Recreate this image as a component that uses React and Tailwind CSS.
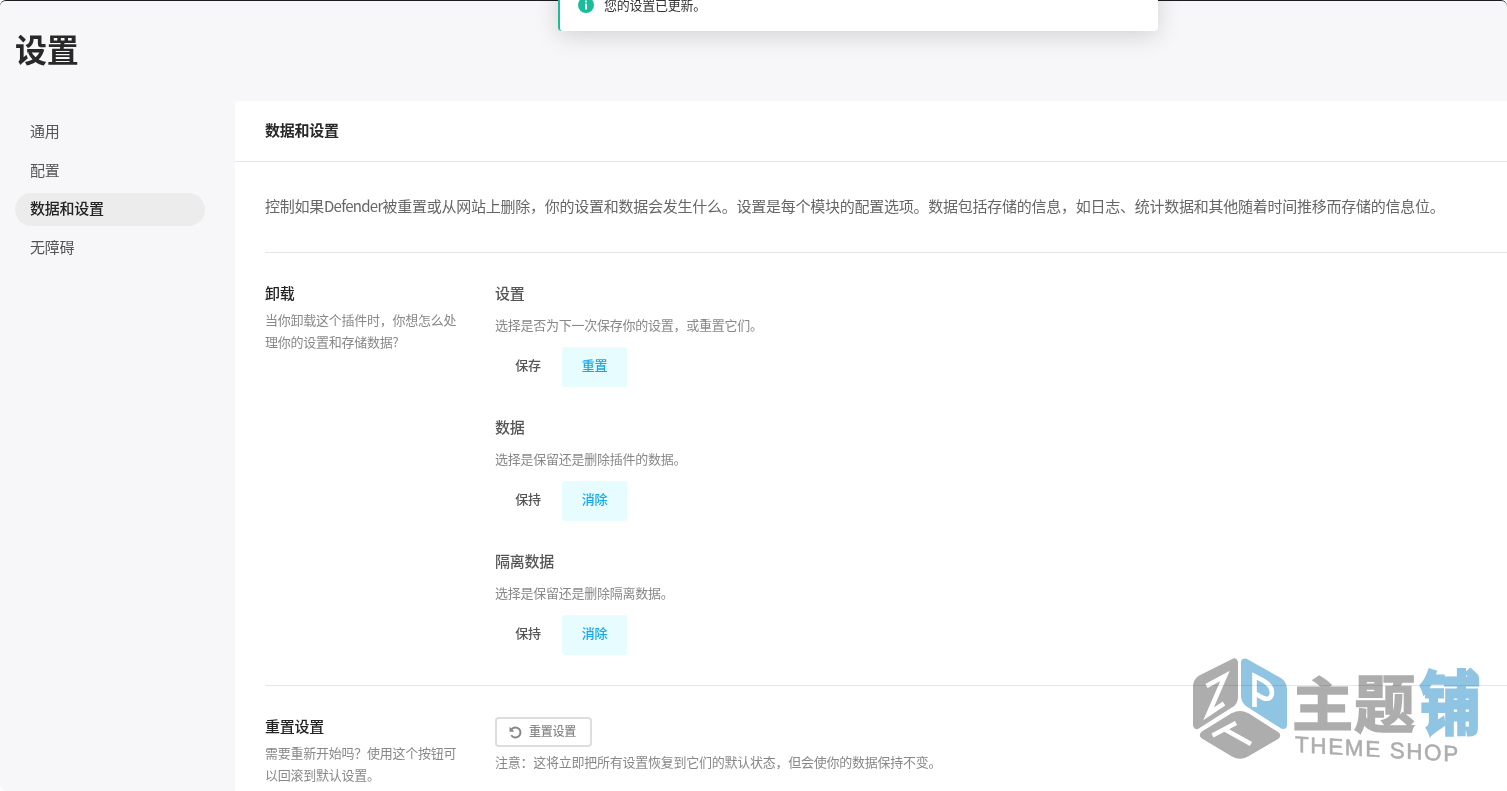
import React, { useState } from "react";

const menu = ["通用", "配置", "数据和设置", "无障碍"];

const uninstallOptions = [
  {
    title: "设置",
    description: "选择是否为下一次保存你的设置，或重置它们。",
    keep: "保存",
    remove: "重置",
  },
  {
    title: "数据",
    description: "选择是保留还是删除插件的数据。",
    keep: "保持",
    remove: "消除",
  },
  {
    title: "隔离数据",
    description: "选择是保留还是删除隔离数据。",
    keep: "保持",
    remove: "消除",
  },
];

function Notice() {
  return (
    <div className="absolute left-[558px] top-[-29px] flex h-[60px] w-[600px] items-center rounded border-l-2 border-[#1abc9c] bg-white pl-[18px] shadow-[0_5px_25px_0_rgba(0,0,0,0.15)]">
      <svg width="16" height="16" viewBox="0 0 16 16" className="mt-[8px]">
        <circle cx="8" cy="8" r="8" fill="#1abc9c" />
        <rect x="7" y="3.4" width="2" height="2" rx="0.6" fill="#fff" />
        <rect x="7" y="6.6" width="2" height="6" rx="0.6" fill="#fff" />
      </svg>
      <p className="ml-[10px] mt-[7px] text-[13px] leading-[22px] text-[#333]">
        您的设置已更新。
      </p>
    </div>
  );
}

function OptionTabs({ keep, remove }) {
  const [active, setActive] = useState("remove");
  const on = "bg-[#e6fcff] text-[#17a8e3]";
  const off = "text-[#555]";

  return (
    <div className="mt-[11px] flex h-10 text-[13px] font-medium leading-[36px]">
      <button
        onClick={() => setActive("keep")}
        className={`w-[66px] rounded-[3px] pb-[4px] ${active === "keep" ? on : off}`}
      >
        {keep}
      </button>
      <button
        onClick={() => setActive("remove")}
        className={`ml-px w-[65px] rounded-[3px] pb-[4px] ${active === "remove" ? on : off}`}
      >
        {remove}
      </button>
    </div>
  );
}

function ShopLogo() {
  return (
    <svg
      width="300"
      height="120"
      viewBox="1185 650 300 120"
      className="pointer-events-none absolute left-[1185px] top-[650px] mix-blend-multiply"
    >
      <g strokeLinejoin="round" strokeWidth="8">
        <path d="M1234 662.5V697Q1234 702 1230 704L1197 725V687Q1197 682 1201 679Z" fill="#adadad" stroke="#adadad" />
        <path d="M1245 662.5L1278 681Q1283 684 1283 689V725L1250 704Q1245 701 1245 696Z" fill="#8fc4e2" stroke="#8fc4e2" />
        <path d="M1204 735L1234 716.5Q1240 713.5 1246 716.5L1276 735.5L1246 753Q1240 756.5 1234 753Z" fill="#adadad" stroke="#adadad" />
      </g>
      <g fill="none" stroke="#fff" strokeWidth="4.6">
        <path d="M1206.5 686L1225 676L1208.5 714L1224 703.5" />
        <path d="M1254.5 707V676L1264 681Q1272 686 1272 693Q1271 701 1263 698L1255 693.5" />
        <path d="M1212.5 735.5L1236 723M1224 729L1251 744" />
      </g>
      <g
        fontFamily="'Noto Sans CJK SC', sans-serif"
        fontWeight="700"
        fontSize="60"
        letterSpacing="0"
        strokeWidth="1.6"
      >
        <text transform="matrix(1.02 0 0 .96 1292 726)" fill="#adadad" stroke="#adadad">主</text>
        <text transform="matrix(1.02 0 0 1.05 1354 726.5)" fill="#adadad" stroke="#adadad">题</text>
        <text transform="matrix(1.02 0 0 1.16 1419.5 728.5)" fill="#8fc4e2" stroke="#8fc4e2" strokeWidth="2.4">铺</text>
      </g>
      <text
        transform="matrix(1 .06 0 1 1295 752)"
        fontFamily="'Liberation Sans', sans-serif"
        fontSize="22.5"
        textLength="163"
        fill="#adadad"
        stroke="#adadad"
        strokeWidth="0.5"
      >
        THEME SHOP
      </text>
    </svg>
  );
}

export default function App() {
  const [current, setCurrent] = useState("数据和设置");

  return (
    <div className="relative h-[791px] w-[1507px] overflow-hidden bg-white font-['Noto_Sans_CJK_SC',sans-serif] tracking-[-0.25px]">
      <div className="h-full overflow-hidden rounded-[6px] border-t border-[#1d1a20] bg-[#f7f7f9]">
        <h1 className="h-[100px] pl-[15px] pt-[27px] text-[32px] font-bold leading-[40px] text-[#282828]">
          设置
        </h1>
        <div className="flex">
          <nav className="flex w-[235px] flex-col gap-[5.5px] px-[15px] pr-[30px] pt-[15px] text-[15px]">
            {menu.map((item) => (
              <button
                key={item}
                onClick={() => setCurrent(item)}
                className={`h-[33px] rounded-full pb-[4px] pl-[15px] text-left leading-[29px] ${
                  item === current
                    ? "bg-[#ececec] font-medium text-[#222]"
                    : "text-[#555]"
                }`}
              >
                {item}
              </button>
            ))}
          </nav>

          <main className="h-[700px] w-[1272px] rounded-tl bg-white">
            <h2 className="h-[61px] border-b border-[#e6e6e6] pl-[30px] text-[15px] font-bold leading-[58px] text-[#282828]">
              数据和设置
            </h2>
            <div className="pl-[30px]">
              <p className="h-[91px] whitespace-nowrap border-b border-[#e6e6e6] pt-[29px] text-[15px] leading-[30px] text-[#666]">
                控制如果<span className="tracking-[-0.72px]">Defender</span>被重置或从网站上删除，你的设置和数据会发生什么。设置是每个模块的配置选项。数据包括存储的信息，如日志、统计数据和其他随着时间推移而存储的信息位。
              </p>

              <section className="flex h-[433px] border-b border-[#e6e6e6] pt-[29px]">
                <div className="w-[230px] pr-[30px]">
                  <h3 className="text-[15px] font-medium leading-[22px] text-[#222]">卸载</h3>
                  <p className="mt-[5px] text-[13px] leading-[22px] text-[#888]">
                    当你卸载这个插件时，你想怎么处理你的设置和存储数据?
                  </p>
                </div>
                <div className="flex flex-col gap-[30px]">
                  {uninstallOptions.map((option) => (
                    <div key={option.title} className="h-[104px]">
                      <h4 className="text-[15px] font-medium leading-[22px] text-[#555]">
                        {option.title}
                      </h4>
                      <p className="mt-[10px] text-[13px] leading-[22px] text-[#888]">
                        {option.description}
                      </p>
                      <OptionTabs keep={option.keep} remove={option.remove} />
                    </div>
                  ))}
                </div>
              </section>

              <section className="flex pt-[29px]">
                <div className="w-[230px] pr-[30px]">
                  <h3 className="text-[15px] font-medium leading-[22px] text-[#222]">重置设置</h3>
                  <p className="mt-[5px] text-[13px] leading-[22px] text-[#888]">
                    需要重新开始吗？使用这个按钮可以回滚到默认设置。
                  </p>
                </div>
                <div className="pt-[2px]">
                  <button className="flex h-[30px] w-[97px] items-center rounded-[4px] border-2 border-[#ddd] pl-[12px] text-[12px] font-medium text-[#888]">
                    <svg width="13" height="13" viewBox="0 0 13 13" fill="none" stroke="#888" strokeWidth="2">
                      <path d="M2.4 3.6A5 5 0 1 1 2.3 9.3" />
                      <path d="M0.5 0.8V5.7H5.4Z" fill="#888" stroke="none" />
                    </svg>
                    <span className="mb-[2px] ml-[7px]">重置设置</span>
                  </button>
                  <p className="mt-[4px] text-[13px] leading-[22px] text-[#888]">
                    注意：这将立即把所有设置恢复到它们的默认状态，但会使你的数据保持不变。
                  </p>
                </div>
              </section>
            </div>
          </main>
        </div>
      </div>

      <Notice />
      <ShopLogo />
    </div>
  );
}
